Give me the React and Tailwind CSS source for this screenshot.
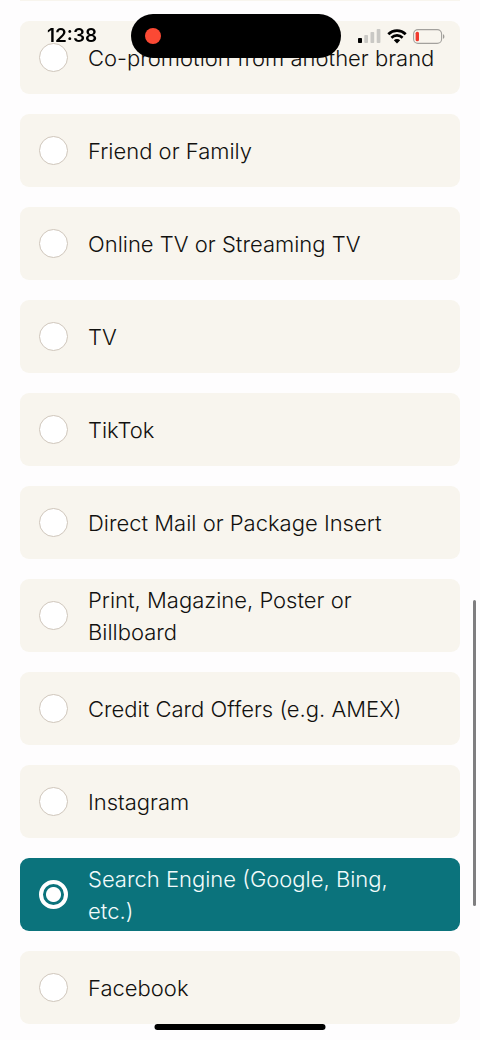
import { useState } from 'react'

// ── Data ──────────────────────────────────────────────────────────────────────
const OPTIONS = [
  { id: 'co-promotion', label: 'Co-promotion from another brand' },
  { id: 'friend',       label: 'Friend or Family' },
  { id: 'online-tv',    label: 'Online TV or Streaming TV' },
  { id: 'tv',           label: 'TV' },
  { id: 'tiktok',       label: 'TikTok' },
  { id: 'mail',         label: 'Direct Mail or Package Insert' },
  { id: 'print',        label: 'Print, Magazine, Poster or Billboard' },
  { id: 'credit-card',  label: 'Credit Card Offers (e.g. AMEX)' },
  { id: 'instagram',    label: 'Instagram' },
  { id: 'search',       label: 'Search Engine (Google, Bing, etc.)' },
  { id: 'facebook',     label: 'Facebook' },
]

// ── Status bar ────────────────────────────────────────────────────────────────
function SignalIcon() {
  return (
    <svg width="23" height="16" viewBox="0 0 23 16" aria-hidden="true">
      <rect x="0" y="10" width="4" height="5" rx="0.8" fill="#000" />
      <rect x="6.3" y="7" width="3.7" height="8" rx="0.8" fill="#c9c8c4" />
      <rect x="12.5" y="4" width="3.7" height="11" rx="0.8" fill="#c9c8c4" />
      <rect x="18.7" y="1" width="3.7" height="14" rx="0.8" fill="#c9c8c4" />
    </svg>
  )
}

function WifiIcon() {
  return (
    <svg width="20" height="15" viewBox="0 0 20 15" fill="none" stroke="#000" aria-hidden="true">
      <path d="M1.3 5.2a12.6 12.6 0 0 1 17.4 0" strokeWidth="2.8" />
      <path d="M4.4 8.7a8 8 0 0 1 11.2 0" strokeWidth="2.6" />
      <path d="M10 14.4 6.8 11.3a4.6 4.6 0 0 1 6.4 0Z" fill="#000" stroke="none" />
    </svg>
  )
}

function BatteryIcon() {
  return (
    <svg width="32" height="15" viewBox="0 0 32 15" fill="none" aria-hidden="true">
      <rect x="0.6" y="0.6" width="28" height="13.8" rx="4.4" stroke="#a3a19d" strokeWidth="1.1" />
      <rect x="2.6" y="2.8" width="3.4" height="9.4" rx="1.5" fill="#f03a2e" />
      <path d="M30.2 5.2c1.5.6 1.5 4 0 4.6Z" fill="#8a8884" />
    </svg>
  )
}

function StatusBar() {
  return (
    <header className="fixed inset-x-0 top-3.5 z-10 flex h-11 items-center pl-[47px] pr-[35px]">
      <span className="w-[84px] shrink-0 text-[19px] leading-6 font-semibold text-black">12:38</span>
      <div className="flex h-11 w-[210px] shrink-0 items-center rounded-full bg-black pl-3.5">
        <span className="size-4 rounded-full bg-[#fb4934]" />
      </div>
      <div className="ml-auto flex items-center gap-1.5">
        <SignalIcon />
        <WifiIcon />
        <BatteryIcon />
      </div>
    </header>
  )
}

// ── Option card ───────────────────────────────────────────────────────────────
function Option({ id, label, checked, onSelect }) {
  return (
    <label
      htmlFor={id}
      className={`flex min-h-[73px] cursor-pointer items-center gap-5 rounded-[9px] py-1 pr-6 pl-[19px] ${
        checked ? 'bg-[#0b737c] text-[#f2fbfb]' : 'bg-[#f8f5ee] text-[#12110f]'
      }`}
    >
      <input
        id={id}
        type="radio"
        name="source"
        checked={checked}
        onChange={() => onSelect(id)}
        className="size-[29px] shrink-0 appearance-none rounded-full border border-[#cfc6bb] bg-white checked:border-4 checked:border-white checked:bg-[radial-gradient(circle,#fff_7px,#0b737c_8px)]"
      />
      <span className="text-[22px] leading-8 font-light">{label}</span>
    </label>
  )
}

// ── Page ──────────────────────────────────────────────────────────────────────
export default function App() {
  const [selected, setSelected] = useState('search')

  return (
    <div className="min-h-screen bg-[#fefdfe] font-['Inter',sans-serif]">
      <StatusBar />

      <main className="flex flex-col gap-5 px-5 pb-4">
        {/* Tail of the card scrolled off the top */}
        <div className="h-px bg-[#f8f5ee]" />
        {OPTIONS.map(o => (
          <Option key={o.id} {...o} checked={selected === o.id} onSelect={setSelected} />
        ))}
      </main>

      {/* Scroll thumb */}
      <div className="fixed top-[600px] right-1 h-[306px] w-[3px] rounded-full bg-[#7f7e80]" />

      {/* Home indicator */}
      <div className="fixed bottom-2.5 left-1/2 h-1.5 w-[171px] -translate-x-1/2 rounded-full bg-black" />
    </div>
  )
}
